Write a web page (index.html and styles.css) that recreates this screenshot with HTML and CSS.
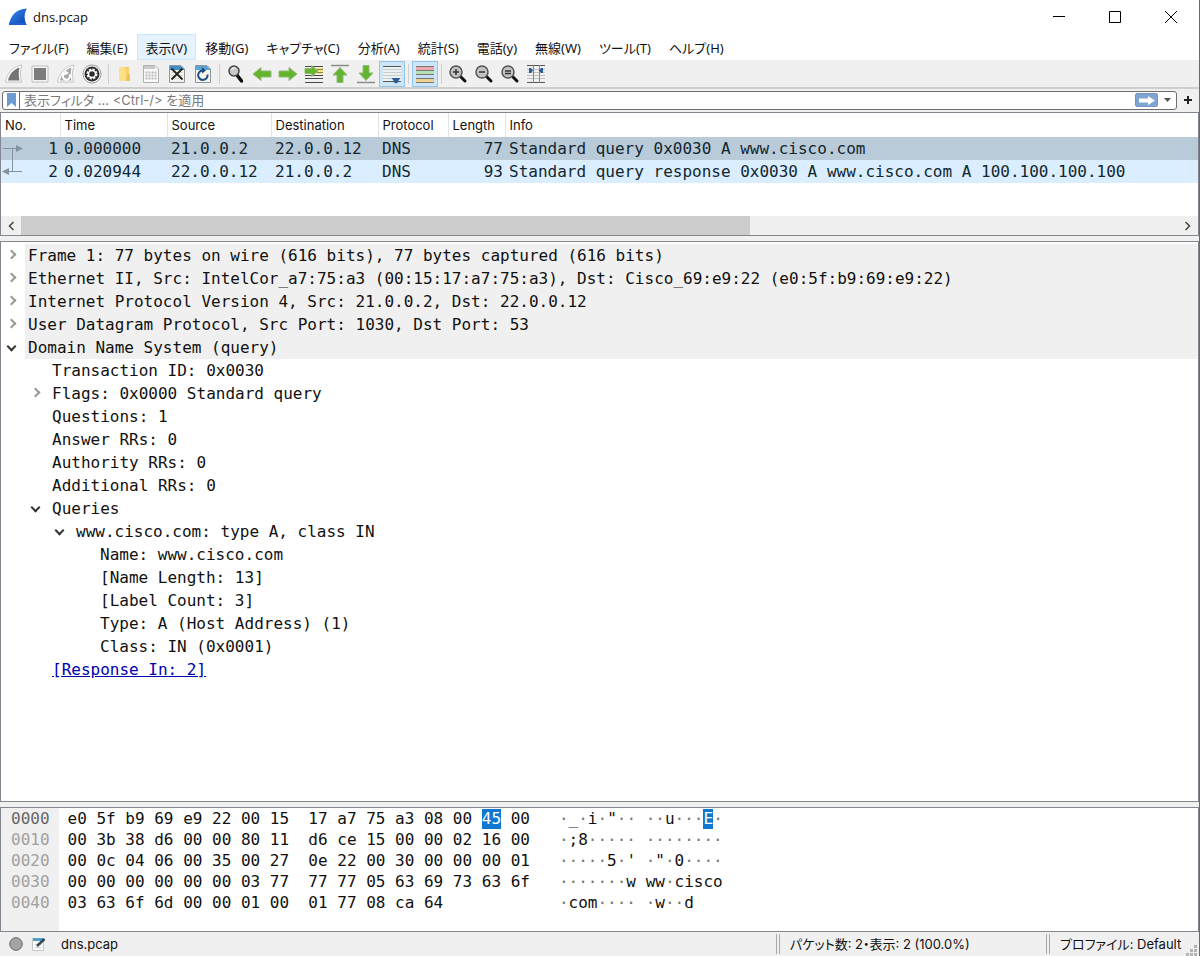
FILE: index.html
```html
<!DOCTYPE html>
<html lang="ja">
<head>
    <meta charset="UTF-8">
    <meta name="viewport" content="width=device-width, initial-scale=1.0">
    <title>dns.pcap</title>
    <link rel="stylesheet" href="styles.css">
</head>
<body>

<div class="window">

    <!-- Title bar -->
    <header class="titlebar">
        <svg class="logo" width="20" height="18" viewBox="0 0 20 18">
            <defs>
                <linearGradient id="fin" x1="0" y1="0" x2="1" y2="1">
                    <stop offset="0" stop-color="#3b8df0"/>
                    <stop offset="1" stop-color="#0a3fae"/>
                </linearGradient>
            </defs>
            <path d="M1 17C2 8 8 1 19 0.500C16 5 16 11 18.500 17Z" fill="url(#fin)"/>
            <path d="M1 17L1.500 14.500H17.500L18.500 17Z" fill="#1d5fd0"/>
        </svg>
        <h1 class="title">dns.pcap</h1>
        <div class="window-buttons">
            <button aria-label="最小化"><svg width="12" height="12"><path d="M0 5.500H12" stroke="#000"/></svg></button>
            <button aria-label="最大化"><svg width="12" height="12"><path d="M.5 .5H11.500V11.500H.5Z" stroke="#000" fill="none"/></svg></button>
            <button aria-label="閉じる"><svg width="12" height="12"><path d="M0 0L12 12M12 0L0 12" stroke="#000"/></svg></button>
        </div>
    </header>

    <!-- Menu -->
    <nav class="menubar">
        <button>ファイル(F)</button>
        <button>編集(E)</button>
        <button class="active">表示(V)</button>
        <button>移動(G)</button>
        <button>キャプチャ(C)</button>
        <button>分析(A)</button>
        <button>統計(S)</button>
        <button>電話(y)</button>
        <button>無線(W)</button>
        <button>ツール(T)</button>
        <button>ヘルプ(H)</button>
    </nav>

    <!-- Toolbar -->
    <div class="toolbar">
        <button aria-label="キャプチャ開始"><svg width="20" height="20" viewBox="0 0 20 20"><path d="M1.500 18C3 9 9 2.500 18 1C16 7 16 12 17.500 18Z" fill="#fff" stroke="#c4c4c4"/><path d="M4 16.500C5.500 10 9.500 5.500 15.500 3.500C14.500 8 14.500 12 15.500 16.500Z" fill="#747474"/></svg></button>
        <button aria-label="キャプチャ停止"><svg width="20" height="20" viewBox="0 0 20 20"><path d="M2 2H18V18H2Z" fill="#f6f6f6" stroke="#bdbdbd"/><path d="M4 4H16V16H4Z" fill="#7c7c7c"/></svg></button>
        <button aria-label="キャプチャ再開"><svg width="20" height="20" viewBox="0 0 20 20"><path d="M1.500 18C3 9 9 2.500 18 1C16 7 16 12 17.500 18Z" fill="#fff" stroke="#c4c4c4"/><path d="M4 16.500C5.500 10 9.500 5.500 15.500 3.500C14.500 8 14.500 12 15.500 16.500Z" fill="#a5a5a5"/><path d="M13.500 10.500A3.500 3.500 0 1 1 9 9" fill="none" stroke="#fff" stroke-width="2"/><path d="M9 6L13 9L8.500 11.500Z" fill="#fff"/></svg></button>
        <button aria-label="オプション"><svg width="20" height="20" viewBox="0 0 20 20"><circle cx="10" cy="10" r="9" fill="#fff" stroke="#9a9a9a"/><circle cx="10" cy="10" r="7.500" fill="#2e2e2e"/><circle cx="10" cy="10" r="4.600" fill="none" stroke="#fff" stroke-width="1.800" stroke-dasharray="2.200 1.400"/><circle cx="10" cy="10" r="3.500" fill="none" stroke="#fff" stroke-width="1.500"/><circle cx="10" cy="10" r="2" fill="#2e2e2e"/></svg></button>
        <span class="separator"></span>
        <button aria-label="開く"><svg width="20" height="20" viewBox="0 0 20 20"><path d="M4 3H14V16L13 17H4Z" fill="#f6cf68"/><path d="M4 3H8L11 6V17H4Z" fill="#ffe08a"/><path d="M12 10H15V17H11Z" fill="#f2c453"/></svg></button>
        <button aria-label="保存"><svg width="20" height="20" viewBox="0 0 20 20"><path d="M2.500 1.500H14L17.500 5V18.500H2.500Z" fill="#fafafa" stroke="#b0b0b0"/><path d="M3 2H14V5H3Z" fill="#c8c8c8"/><path d="M4.500 8.500H15.500M4.500 11.500H15.500M4.500 14.500H15.500" stroke="#bcbcbc" stroke-dasharray="2 1" stroke-width="2"/></svg></button>
        <button aria-label="閉じる"><svg width="20" height="20" viewBox="0 0 20 20"><path d="M2.500 1.500H14L17.500 5V18.500H2.500Z" fill="#f4f4ea" stroke="#8e989c"/><path d="M3 2H14L17 5V6H3Z" fill="#3f8fc4"/><path d="M4.500 8.500H15.500M4.500 11.500H15.500M4.500 14.500H15.500" stroke="#cfcfc4" stroke-dasharray="2 1"/><path d="M4.500 4.500L15.500 15.500M15.500 4.500L4.500 15.500" stroke="#222" stroke-width="1.800"/></svg></button>
        <button aria-label="再読み込み"><svg width="20" height="20" viewBox="0 0 20 20"><path d="M2.500 1.500H14L17.500 5V18.500H2.500Z" fill="#f4f4ea" stroke="#8e989c"/><path d="M3 2H14L17 5V6H3Z" fill="#5aa5d2"/><path d="M14.500 10.500A4.700 4.700 0 1 1 9.500 6.500" fill="none" stroke="#1f4f85" stroke-width="2"/><path d="M9 3L13 6.500L9 9.500Z" fill="#1f4f85"/></svg></button>
        <span class="separator"></span>
        <button aria-label="検索"><svg width="20" height="20" viewBox="0 0 20 20"><path d="M11 11L15.500 17" stroke="#111" stroke-width="3.500" stroke-linecap="round"/><circle cx="8" cy="7" r="5" fill="#c9c9c9" stroke="#444" stroke-width="1.500"/><path d="M5.500 6A3 3 0 0 1 9 4" stroke="#fff" fill="none"/></svg></button>
        <button aria-label="前へ"><svg width="20" height="20" viewBox="0 0 20 20"><path d="M1 10L9 3.500V7H19V13H9V16.500Z" fill="#62b52c" stroke="#93b87c"/></svg></button>
        <button aria-label="次へ"><svg width="20" height="20" viewBox="0 0 20 20"><path d="M19 10L11 3.500V7H1V13H11V16.500Z" fill="#62b52c" stroke="#93b87c"/></svg></button>
        <button aria-label="パケットへ移動"><svg width="20" height="20" viewBox="0 0 20 20"><path d="M1 2.500H19M1 11.500H19M1 14.500H19M1 18.500H19" stroke="#4a4a4a"/><path d="M12 4H19V10H12Z" fill="#f5e48a"/><path d="M13 5.500H19M13 8.500H19" stroke="#8a8248"/><path d="M14 7L7.500 1.500V4.500H1V9.500H7.500V12.500Z" fill="#62b52c" stroke="#93b87c"/></svg></button>
        <button aria-label="先頭"><svg width="20" height="20" viewBox="0 0 20 20"><path d="M1 1.500H19" stroke="#8c8c8c" stroke-width="1.500"/><path d="M10 3.500L17 11H13V18.500H7V11H3Z" fill="#62b52c" stroke="#93b87c"/></svg></button>
        <button aria-label="最後"><svg width="20" height="20" viewBox="0 0 20 20"><path d="M1 18.500H19" stroke="#8c8c8c" stroke-width="1.500"/><path d="M10 16.500L17 9H13V1.500H7V9H3Z" fill="#62b52c" stroke="#93b87c"/></svg></button>
        <button class="checked" aria-label="自動スクロール"><svg width="20" height="20" viewBox="0 0 20 20"><path d="M1 3H19V17H1Z" fill="#eef1f2"/><path d="M1 2.500H19M1 17.500H19" stroke="#555"/><path d="M1 5.500H19M1 8.500H19M1 11.500H19M1 14.500H10" stroke="#c8cdd0"/><path d="M9.500 14H18.500L16.500 16.500V18L14 19.500L11.500 18V16.500Z" fill="#2b5b9c"/></svg></button>
        <span class="separator"></span>
        <button class="checked" aria-label="色付け"><svg width="20" height="20" viewBox="0 0 20 20"><path d="M1 2.500H19M1 6.500H19M1 10.500H19M1 14.500H19M1 18.500H19" stroke="#777"/><path d="M1 4.500H19" stroke="#eda9a9" stroke-width="3"/><path d="M1 8.500H19" stroke="#b5e3b1" stroke-width="3"/><path d="M1 12.500H19" stroke="#c4dcf4" stroke-width="3"/><path d="M1 16.500H19" stroke="#eed28c" stroke-width="3"/></svg></button>
        <span class="separator"></span>
        <button aria-label="拡大"><svg width="20" height="20" viewBox="0 0 20 20"><path d="M12.500 12.500L17 17" stroke="#111" stroke-width="3" stroke-linecap="round"/><circle cx="8" cy="8" r="6" fill="#c4c4c4" stroke="#555" stroke-width="1.500"/><path d="M5 8H11M8 5V11" stroke="#333" stroke-width="1.500"/></svg></button>
        <button aria-label="縮小"><svg width="20" height="20" viewBox="0 0 20 20"><path d="M12.500 12.500L17 17" stroke="#111" stroke-width="3" stroke-linecap="round"/><circle cx="8" cy="8" r="6" fill="#c4c4c4" stroke="#555" stroke-width="1.500"/><path d="M5 8H11" stroke="#333" stroke-width="1.500"/></svg></button>
        <button aria-label="標準サイズ"><svg width="20" height="20" viewBox="0 0 20 20"><path d="M12.500 12.500L17 17" stroke="#111" stroke-width="3" stroke-linecap="round"/><circle cx="8" cy="8" r="6" fill="#c4c4c4" stroke="#555" stroke-width="1.500"/><path d="M5 7H11M5 9.500H11" stroke="#333" stroke-width="1.500"/></svg></button>
        <button aria-label="列幅調整"><svg width="20" height="20" viewBox="0 0 20 20"><path d="M1 1.500H19M1 18.500H19" stroke="#555"/><path d="M1 5.500H19M1 8.500H19M1 11.500H19M1 14.500H19" stroke="#c2c2c2"/><path d="M7.500 1V19M13.500 1V19" stroke="#888"/><path d="M3 4H5L7 6.500L5 9H3Z" fill="#2b5b9c"/><path d="M17 4H15L13 6.500L15 9H17Z" fill="#2b5b9c"/></svg></button>
    </div>

    <!-- Display filter -->
    <div class="filterbar">
        <div class="filter-box">
            <button class="bookmark" aria-label="ブックマーク"><svg width="9" height="14"><path d="M0 0H9V14L4.500 10L0 14Z" fill="#6d9bd1"/></svg></button>
            <input class="filter-input" type="text" aria-label="表示フィルタ" placeholder="表示フィルタ … &lt;Ctrl-/&gt; を適用">
            <button class="apply" aria-label="適用"><svg width="16" height="9"><path d="M0 2.500H9V0L16 4.500L9 9V6.500H0Z" fill="#fff"/></svg></button>
            <button class="history" aria-label="履歴"><svg width="7" height="4"><path d="M0 0H7L3.500 4Z" fill="#555"/></svg></button>
        </div>
        <button class="add-filter" aria-label="フィルタ追加"><svg width="8" height="8"><path d="M0 4H8M4 0V8" stroke="#222" stroke-width="2"/></svg></button>
    </div>

    <!-- Packet list -->
    <section class="pane packets">
        <table class="packet-table">
            <colgroup>
                <col class="col-no"><col class="col-time"><col class="col-source"><col class="col-dest">
                <col class="col-protocol"><col class="col-length"><col>
            </colgroup>
            <thead>
                <tr><th>No.</th><th>Time</th><th>Source</th><th>Destination</th><th>Protocol</th><th>Length</th><th>Info</th></tr>
            </thead>
            <tbody>
                <tr class="selected">
                    <td><div class="number"><svg width="24" height="23"><path d="M2 11.500H17M11.500 11.500V23" stroke="#84929d"/><path d="M15 8L22 11.500L15 15Z" fill="#84929d"/></svg>1</div></td>
                    <td>0.000000</td><td>21.0.0.2</td><td>22.0.0.12</td><td>DNS</td><td class="length">77</td>
                    <td>Standard query 0x0030 A www.cisco.com</td>
                </tr>
                <tr id="packet-2">
                    <td><div class="number"><svg width="24" height="23"><path d="M7 11.500H21M11.500 0V11.500" stroke="#84929d"/><path d="M8 8L1 11.500L8 15Z" fill="#84929d"/></svg>2</div></td>
                    <td>0.020944</td><td>22.0.0.12</td><td>21.0.0.2</td><td>DNS</td><td class="length">93</td>
                    <td>Standard query response 0x0030 A www.cisco.com A 100.100.100.100</td>
                </tr>
            </tbody>
        </table>
        <div class="scrollbar">
            <button aria-label="左へ"><svg width="6" height="10"><path d="M5.500 1L1.500 5L5.500 9" fill="none" stroke="#444" stroke-width="1.500"/></svg></button>
            <div class="track"><div class="thumb"></div></div>
            <button aria-label="右へ"><svg width="6" height="10"><path d="M.5 1L4.500 5L.5 9" fill="none" stroke="#444" stroke-width="1.500"/></svg></button>
        </div>
    </section>

    <!-- Packet details -->
    <section class="pane details">
        <ul class="tree">
            <li><div class="node protocol"><button class="toggle" aria-label="展開"></button><span>Frame 1: 77 bytes on wire (616 bits), 77 bytes captured (616 bits)</span></div></li>
            <li><div class="node protocol"><button class="toggle" aria-label="展開"></button><span>Ethernet II, Src: IntelCor_a7:75:a3 (00:15:17:a7:75:a3), Dst: Cisco_69:e9:22 (e0:5f:b9:69:e9:22)</span></div></li>
            <li><div class="node protocol"><button class="toggle" aria-label="展開"></button><span>Internet Protocol Version 4, Src: 21.0.0.2, Dst: 22.0.0.12</span></div></li>
            <li><div class="node protocol"><button class="toggle" aria-label="展開"></button><span>User Datagram Protocol, Src Port: 1030, Dst Port: 53</span></div></li>
            <li>
                <div class="node protocol"><button class="toggle open" aria-label="折りたたむ"></button><span>Domain Name System (query)</span></div>
                <ul>
                    <li><div class="node"><span>Transaction ID: 0x0030</span></div></li>
                    <li><div class="node"><button class="toggle" aria-label="展開"></button><span>Flags: 0x0000 Standard query</span></div></li>
                    <li><div class="node"><span>Questions: 1</span></div></li>
                    <li><div class="node"><span>Answer RRs: 0</span></div></li>
                    <li><div class="node"><span>Authority RRs: 0</span></div></li>
                    <li><div class="node"><span>Additional RRs: 0</span></div></li>
                    <li>
                        <div class="node"><button class="toggle open" aria-label="折りたたむ"></button><span>Queries</span></div>
                        <ul>
                            <li>
                                <div class="node"><button class="toggle open" aria-label="折りたたむ"></button><span>www.cisco.com: type A, class IN</span></div>
                                <ul>
                                    <li><div class="node"><span>Name: www.cisco.com</span></div></li>
                                    <li><div class="node"><span>[Name Length: 13]</span></div></li>
                                    <li><div class="node"><span>[Label Count: 3]</span></div></li>
                                    <li><div class="node"><span>Type: A (Host Address) (1)</span></div></li>
                                    <li><div class="node"><span>Class: IN (0x0001)</span></div></li>
                                </ul>
                            </li>
                        </ul>
                    </li>
                    <li><div class="node"><span><a href="#packet-2">[Response In: 2]</a></span></div></li>
                </ul>
            </li>
        </ul>
    </section>

    <!-- Packet bytes -->
    <section class="pane bytes">
        <table class="byte-table">
            <tbody>
                <tr>
                    <th class="current">0000</th>
                    <td class="hex">e0 5f b9 69 e9 22 00 15  17 a7 75 a3 08 00 <mark>45</mark> 00</td>
                    <td class="ascii">·<b>_</b>·<b>i</b>·<b>"</b>·· ··<b>u</b>···<mark>E</mark>·</td>
                </tr>
                <tr>
                    <th>0010</th>
                    <td class="hex">00 3b 38 d6 00 00 80 11  d6 ce 15 00 00 02 16 00</td>
                    <td class="ascii">·<b>;8</b>····· ········</td>
                </tr>
                <tr>
                    <th>0020</th>
                    <td class="hex">00 0c 04 06 00 35 00 27  0e 22 00 30 00 00 00 01</td>
                    <td class="ascii">·····<b>5</b>·<b>'</b> ·<b>"</b>·<b>0</b>····</td>
                </tr>
                <tr>
                    <th>0030</th>
                    <td class="hex">00 00 00 00 00 00 03 77  77 77 05 63 69 73 63 6f</td>
                    <td class="ascii">·······<b>w ww</b>·<b>cisco</b></td>
                </tr>
                <tr>
                    <th>0040</th>
                    <td class="hex">03 63 6f 6d 00 00 01 00  01 77 08 ca 64</td>
                    <td class="ascii">·<b>com</b>···· ·<b>w</b>··<b>d</b></td>
                </tr>
                <tr class="filler"><th></th><td></td><td></td></tr>
            </tbody>
        </table>
    </section>

    <!-- Status bar -->
    <footer class="statusbar">
        <div class="status-file">
            <button aria-label="エキスパート情報"><svg width="14" height="14"><circle cx="7" cy="7" r="6.300" fill="#a3a3a3" stroke="#686868"/></svg></button>
            <button aria-label="コメント"><svg width="14" height="14"><path d="M.5 1.500H11.500V13.500H.5Z" fill="#fafafa" stroke="#c6c6c6"/><path d="M1 1H11V4H1Z" fill="#4f9fca"/><path d="M3 7.500H9M3 10.500H9" stroke="#cfcfcf"/><path d="M5 9L12.500 2" stroke="#34495a" stroke-width="2.500"/></svg></button>
            <span>dns.pcap</span>
        </div>
        <div class="status-packets">パケット数: 2・表示: 2 (100.0%)</div>
        <div class="status-profile">プロファイル: Default</div>
        <svg class="grip" width="11" height="11"><path d="M8 1.500H11M4 5.500H7M8 5.500H11M0 9.500H3M4 9.500H7M8 9.500H11" stroke="#b4b4b4" stroke-width="3"/></svg>
    </footer>

</div>

</body>
</html>
```

FILE: styles.css
```css
:root {
    --chrome: #f0f0f0;
    --border: #828790;
    --row: 23px;
    --mono: "DejaVu Sans Mono", "Liberation Mono", monospace;
    --ui: "Noto Sans", "Noto Sans CJK JP", sans-serif;
    --gothic: Inter, "Noto Sans CJK JP", sans-serif;
}

* {
    box-sizing: border-box;
}

body {
    margin: 0;
    background: var(--chrome);
    color: #111;
    font-family: var(--ui);
    font-size: 13px;
    font-feature-settings: "palt";
}

button {
    display: flex;
    align-items: center;
    justify-content: center;
    padding: 0;
    border: none;
    background: none;
    color: inherit;
    font: inherit;
    font-feature-settings: inherit;
}

.window {
    display: flex;
    flex-direction: column;
    min-height: 100vh;
    border-right: 1px solid #6a6a6a;
}

/* Title bar */
.titlebar {
    display: flex;
    align-items: center;
    height: 34px;
    padding-left: 8px;
    background: #fff;
}

.title {
    flex: 1;
    margin: 0 0 0 5px;
    font-family: "Open Sans", sans-serif;
    font-size: 13px;
    font-weight: normal;
}

.window-buttons {
    display: flex;
}

.window-buttons button {
    width: 56px;
    height: 32px;
}

/* Menu */
.menubar {
    display: flex;
    height: 26px;
    background: #fff;
}

.menubar button {
    padding: 0 8px;
    border: 1px solid transparent;
    white-space: nowrap;
}

.menubar .active {
    background: #e5f3ff;
    border-color: #cce8ff;
}

/* Toolbar */
.toolbar {
    display: flex;
    align-items: center;
    height: 29px;
    padding-left: 1px;
    border-bottom: 2px solid #cfcfcf;
}

.toolbar button {
    width: 26px;
    height: 26px;
}

.toolbar .checked {
    background: #cde6f7;
    border: 1px solid #92c5ea;
}

.separator {
    width: 1px;
    height: 20px;
    margin: 0 3px;
    background: #d0d0d0;
}

/* Display filter */
.filterbar {
    display: flex;
    align-items: center;
    height: 22px;
    padding: 1px 0;
}

.filter-box {
    display: flex;
    flex: 1;
    align-items: center;
    height: 19px;
    margin-left: 2px;
    border: 1px solid #6e6e6e;
    border-radius: 3px;
    background: #fff;
}

.bookmark {
    width: 17px;
    height: 17px;
    border-right: 1px solid #6e6e6e;
}

.filter-input {
    flex: 1;
    min-width: 0;
    height: 17px;
    padding: 0 4px;
    border: none;
    outline: none;
    background: none;
    font-family: var(--gothic);
    font-size: 13px;
    font-feature-settings: inherit;
}

.filter-input::placeholder {
    color: #7a7a7a;
}

.apply {
    width: 23px;
    height: 14px;
    border: 1px solid #6f98c8;
    border-radius: 2px;
    background: #7fa6d3;
}

.history {
    width: 18px;
    height: 17px;
}

.add-filter {
    width: 22px;
    height: 19px;
}

/* Panes */
.pane {
    border: 1px solid var(--border);
    background: #fff;
    font-family: var(--mono);
    font-size: 16px;
}

/* Packet list */
.packets {
    display: flex;
    flex-direction: column;
    justify-content: space-between;
    height: 124px;
    margin-top: 1px;
}

.packet-table {
    width: 100%;
    table-layout: fixed;
    border-collapse: collapse;
}

.packet-table tr {
    height: var(--row);
}

.packet-table thead tr {
    height: 24px;
}

.packet-table th {
    padding: 0 4px;
    border-right: 1px solid #e2e2e2;
    font-family: var(--gothic);
    font-size: 13px;
    font-weight: normal;
    text-align: left;
}

.packet-table th:last-child {
    border-right: none;
}

.packet-table td {
    padding: 0 2px 0 4px;
    line-height: var(--row);
    white-space: nowrap;
    overflow: hidden;
}

.packet-table td:first-child {
    padding-left: 0;
}

.packet-table tbody tr {
    background: #daeeff;
    color: #12272e;
}

.packet-table tbody .selected {
    background: #b9cad9;
}

.packet-table .length {
    text-align: right;
}

.number {
    display: flex;
    justify-content: space-between;
    height: var(--row);
}

.col-no { width: 59px; }
.col-time { width: 107px; }
.col-source { width: 104px; }
.col-dest { width: 107px; }
.col-protocol { width: 70px; }
.col-length { width: 57px; }

.scrollbar {
    display: flex;
    height: 19px;
    background: var(--chrome);
}

.scrollbar button {
    width: 20px;
}

.track {
    flex: 1;
    display: flex;
}

.thumb {
    width: 63%;
    background: #cdcdcd;
}

/* Packet details */
.details {
    flex: 1;
    margin-top: 5px;
    padding-top: 2px;
}

.tree,
.tree ul {
    margin: 0;
    padding: 0;
    list-style: none;
}

.tree ul {
    padding-left: 24px;
}

.node {
    display: flex;
    height: var(--row);
    line-height: var(--row);
    white-space: nowrap;
}

.node span {
    flex: 1;
    margin-left: 24px;
    padding-left: 3px;
}

.protocol span {
    background: var(--chrome);
}

.toggle {
    width: 24px;
    padding: 0 4px 2px 0;
}

.node .toggle + span {
    margin-left: 0;
}

.toggle::before {
    content: "";
    width: 5px;
    height: 5px;
    border: solid #999;
    border-width: 2px 2px 0 0;
    transform: rotate(45deg);
}

.toggle.open::before {
    border-color: #333;
    transform: rotate(135deg);
}

.tree a {
    color: #0000b0;
}

/* Packet bytes */
.bytes {
    display: flex;
    height: 125px;
    margin-top: 5px;
}

.byte-table {
    border-spacing: 0;
    line-height: 21px;
    white-space: pre;
}

.byte-table th {
    padding: 1px 9px 0 10px;
    background: var(--chrome);
    color: #a0a0a0;
    font-weight: normal;
    line-height: 20px;
}

.byte-table .current {
    color: #666;
}

.byte-table td {
    padding: 1px 0 0;
    line-height: 20px;
}

.byte-table .hex {
    padding-left: 9px;
}

.byte-table .ascii {
    padding-left: 29px;
    color: #777;
}

.byte-table b {
    color: #111;
    font-weight: normal;
}

.byte-table mark {
    display: inline-block;
    background: #0f78d0;
    color: #fff;
}

/* Status bar */
.statusbar {
    display: flex;
    align-items: center;
    height: 24px;
    font-family: var(--gothic);
}

.status-file {
    display: flex;
    flex: 1;
    align-items: center;
    gap: 9px;
    padding-left: 9px;
}

.status-file span {
    margin-left: 6px;
}

.status-packets,
.status-profile {
    height: 20px;
    padding-left: 10px;
    border-left: 4px double #a8a8a8;
    line-height: 20px;
    white-space: nowrap;
}

.status-packets {
    width: 270px;
}

.status-profile {
    width: 138px;
}

.grip {
    align-self: flex-end;
    margin: 0 2px;
}

.byte-table .filler {
    height: 18px;
}
```
